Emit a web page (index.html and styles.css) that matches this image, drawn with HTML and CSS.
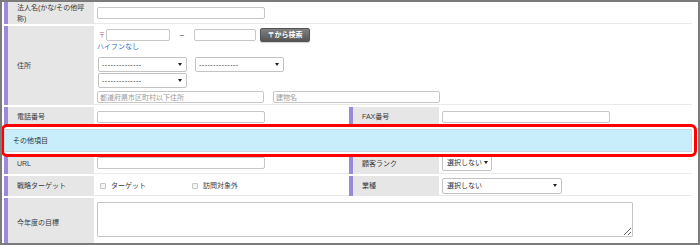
FILE: index.html
```html
<!DOCTYPE html>
<html>
	<head>
		<meta charset="utf-8">
		<title>顧客情報の編集</title>
		<link rel="stylesheet" href="styles.css">
	</head>
	<body>
		<div class="frame">
			<table class="form-table">
				<colgroup>
					<col class="col-label">
					<col class="col-value">
					<col class="col-label">
					<col class="col-value2">
				</colgroup>
				<tr class="row-name">
					<th class="label-wrap">法人名(かな/その他呼称)</th>
					<td colspan="3"><input class="text w-m" type="text"></td>
				</tr>
				<tr class="row-address">
					<th>住所</th>
					<td colspan="3" class="address">
						<div class="zip-line">
							<span class="zip-mark">〒</span>
							<input class="text zip-a" type="text">
							<span class="dash">–</span>
							<input class="text zip-b" type="text">
							<button class="zip-search" type="button">〒から検索</button>
						</div>
						<a class="hyphen-link" href="javascript:void(0);">ハイフンなし</a>
						<div class="select-grid">
							<div class="select"><span class="dashes">--------------</span><i class="caret"></i></div>
							<div class="select"><span class="dashes">--------------</span><i class="caret"></i></div>
							<div class="select"><span class="dashes">--------------</span><i class="caret"></i></div>
						</div>
						<div class="addr-line">
							<input class="text w-m" type="text" placeholder="都道府県市区町村以下住所">
							<input class="text w-m" type="text" placeholder="建物名">
						</div>
					</td>
				</tr>
				<tr class="row-short">
					<th>電話番号</th>
					<td><input class="text w-m" type="text"></td>
					<th>FAX番号</th>
					<td><input class="text w-m" type="text"></td>
				</tr>
				<tr class="section">
					<td colspan="4">その他項目</td>
				</tr>
				<tr class="row-short row-url">
					<th>URL</th>
					<td><input class="text w-m" type="text"></td>
					<th>顧客ランク</th>
					<td><div class="select w-rank"><span>選択しない</span><i class="caret"></i></div></td>
				</tr>
				<tr class="row-short">
					<th>戦略ターゲット</th>
					<td>
						<label class="check"><input type="checkbox">ターゲット</label>
						<label class="check"><input type="checkbox">訪問対象外</label>
					</td>
					<th>業種</th>
					<td><div class="select w-type"><span>選択しない</span><i class="caret"></i></div></td>
				</tr>
				<tr class="row-goal">
					<th>今年度の目標</th>
					<td colspan="3" class="goal"><textarea class="memo"></textarea></td>
				</tr>
			</table>
			<div class="callout"></div>
		</div>
	</body>
</html>
```

FILE: styles.css
```css
* {
	margin: 0;
	padding: 0;
}

body {
	background: #fff;
	font-family: 'Liberation Sans', 'Noto Sans CJK JP', sans-serif;
	font-size: 7px;
	line-height: 10px;
	color: #3a3a3a;
}

.frame {
	position: relative;
	width: 700px;
	height: 245px;
	box-sizing: border-box;
	border: 2px solid #7b7b7b;
	padding: 0 6px 0 2px;
	overflow: hidden;
}

.form-table {
	width: 688px;
	table-layout: fixed;
	border-collapse: separate;
	border-spacing: 0 2px;
	margin-top: -2px;
}

.col-label {
	width: 90px;
}

.col-value {
	width: 255px;
}

.col-value2 {
	width: 253px;
}

th {
	background: #e6e6e6;
	border-left: 4px solid #9c8ad8;
	text-align: left;
	font-weight: normal;
	padding: 0 4px 0 9px;
	vertical-align: middle;
}

.label-wrap {
	line-height: 11px;
}

td {
	border-bottom: 1px solid #e9e9e9;
	padding: 0 3px;
	vertical-align: middle;
}

.row-name {
	height: 22px;
}

.row-address {
	height: 79px;
}

.row-short {
	height: 20px;
}

.row-goal {
	height: 50px;
}

.row-url td {
	padding-bottom: 2px;
}

.text {
	box-sizing: border-box;
	height: 12px;
	border: 1px solid #c6c6c6;
	border-radius: 2px;
	padding: 0 2px;
	font: inherit;
	color: #333;
	background: #fff;
	vertical-align: middle;
	outline: none;
}

.text::placeholder {
	color: #9a9a9a;
}

.w-m {
	width: 168px;
}

/* address block */

.address {
	vertical-align: top;
	padding-top: 2px;
}

.zip-line {
	display: flex;
	align-items: center;
	height: 14px;
}

.zip-mark {
	width: 9px;
	padding-left: 2px;
	box-sizing: border-box;
	font-size: 6px;
	color: #a35a5a;
}

.zip-a {
	width: 64px;
}

.zip-b {
	width: 62px;
}

.dash {
	width: 24px;
	text-align: center;
	color: #222;
}

.zip-search {
	width: 50px;
	height: 14px;
	margin-left: 4px;
	border: 1px solid #545454;
	border-radius: 2px;
	background: linear-gradient(#808080, #555);
	color: #fff;
	font: inherit;
	font-weight: bold;
	box-shadow: 0 1px 1px rgba(0,0,0,.2);
}

.hyphen-link {
	display: block;
	height: 10px;
	color: #3470cc;
	text-decoration: none;
}

.select-grid {
	display: grid;
	grid-template-columns: 89px 89px;
	column-gap: 8px;
	row-gap: 1px;
	margin: 5px 0 0 1px;
}

.select {
	display: flex;
	align-items: center;
	justify-content: space-between;
	box-sizing: border-box;
	height: 15px;
	border: 1px solid #c3c3c3;
	border-radius: 2px;
	padding: 0 4px 0 3px;
	background: #fff;
	color: #333;
}

.dashes {
	letter-spacing: 0.5px;
}

.caret {
	width: 0;
	height: 0;
	border-left: 2px solid transparent;
	border-right: 2px solid transparent;
	border-top: 3px solid #222;
}

.addr-line {
	display: flex;
	gap: 9px;
	margin-top: 3px;
}

.addr-line .w-m {
	width: 167px;
	height: 12px;
}

/* other items */

.section td {
	height: 21px;
	background: #c8eefb;
	border: 1px solid #c9d9de;
	padding: 0 8px;
	color: #333;
}

.w-rank {
	width: 50px;
	height: 16px;
	padding: 0 3px 0 4px;
}

.w-type {
	width: 120px;
	height: 16px;
	padding: 0 4px 0 4px;
}

.check {
	display: inline-flex;
	align-items: center;
	width: 90px;
	vertical-align: middle;
}

.check input {
	appearance: none;
	width: 6px;
	height: 6px;
	margin: 0 5px 0 3px;
	border: 1px solid #c6c6c6;
	border-radius: 1px;
	background: #f4f4f4;
}

.goal {
	vertical-align: top;
	padding-top: 4px;
}

.memo {
	display: block;
	box-sizing: border-box;
	width: 536px;
	height: 35px;
	border: 1px solid #c6c6c6;
	border-radius: 1px;
	font: inherit;
	outline: none;
}

.callout {
	position: absolute;
	left: -1px;
	top: 122px;
	width: 696px;
	height: 33px;
	box-sizing: border-box;
	border: 3px solid #f00;
	border-radius: 6px;
}
```
